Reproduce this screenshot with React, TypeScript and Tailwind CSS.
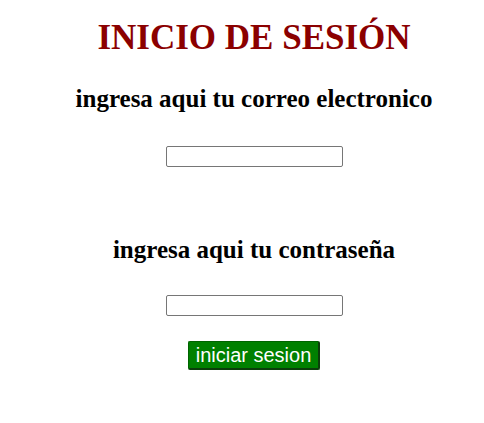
export default function App() {
  return (
    <div className="min-h-screen bg-white pl-[24px] flex flex-col items-center text-center font-['Liberation_Serif',serif]">
      <h1 className="mt-[18px] text-[35px] leading-[40px] font-bold text-[#8b0000]">INICIO DE SESIÓN</h1>
      <h2 className="mt-[26px] text-[25px] leading-[29px] font-bold text-black">
        ingresa aqui tu correo electronico
      </h2>
      <input
        type="text"
        className="mt-[33px] w-[177px] h-[21px] border border-[#767676] rounded-[2px] bg-white px-1 text-[13px]"
      />
      <h2 className="mt-[68px] text-[25px] leading-[29px] font-bold text-black">
        ingresa aqui tu contraseña
      </h2>
      <input
        type="password"
        className="mt-[31px] w-[177px] h-[21px] border border-[#767676] rounded-[2px] bg-white px-1 text-[13px]"
      />
      <button className="mt-[25px] w-[132px] h-[29px] bg-[#008000] text-white text-[20px] leading-none font-['Liberation_Sans',Arial,sans-serif] border border-[#006400] border-r-2 border-b-2 border-r-[#0b3d0b] border-b-[#0b3d0b] rounded-[2px]">
        iniciar sesion
      </button>
    </div>
  );
}
